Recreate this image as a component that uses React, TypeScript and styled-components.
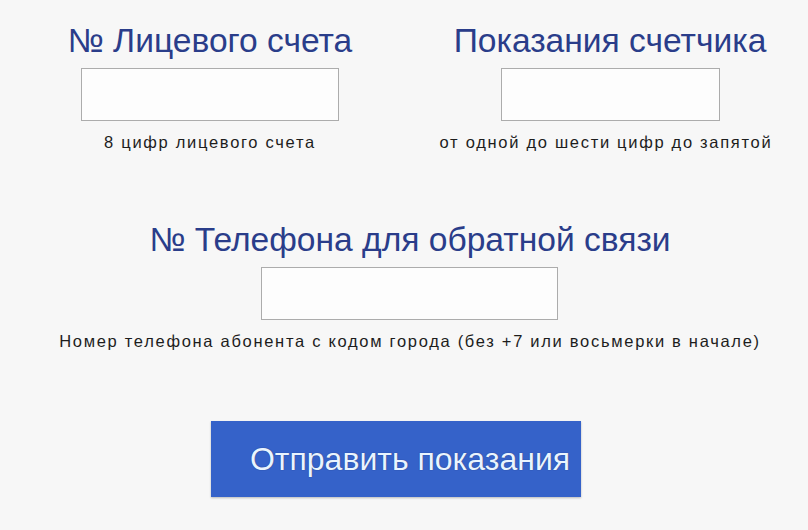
import React from 'react';
import styled, { createGlobalStyle } from 'styled-components';

const GlobalStyle = createGlobalStyle`
  html, body {
    margin: 0;
    padding: 0;
    background: #f7f7f7;
  }
  body {
    font-family: "Liberation Sans", Arial, sans-serif;
  }
`;

const Page = styled.div`
  width: 808px;
  height: 530px;
  padding-top: 24px;
  box-sizing: border-box;
  display: flex;
  flex-direction: column;
  align-items: center;
`;

const TopRow = styled.div`
  display: grid;
  grid-template-columns: 420px 380px;
  width: 808px;
`;

const Field = styled.div`
  display: flex;
  flex-direction: column;
  align-items: center;
`;

const Title = styled.h2`
  margin: 0;
  font-size: 33.6px;
  font-weight: normal;
  line-height: 34px;
  color: #2a3d8a;
  white-space: nowrap;
`;

const Input = styled.input<{ $width: number }>`
  display: block;
  width: ${(p) => p.$width}px;
  height: 53px;
  box-sizing: border-box;
  margin-top: 10px;
  border: 1px solid #acacac;
  background: #fdfdfd;
  outline: none;
`;

const Hint = styled.div<{ $shift?: number }>`
  margin-top: 11px;
  font-size: 16.5px;
  line-height: 20px;
  letter-spacing: 1.7px;
  color: #1d1d1d;
  white-space: nowrap;
  transform: translateX(${(p) => p.$shift ?? 0}px);
`;

const PhoneField = styled(Field)`
  margin-top: 71px;
  padding-left: 12px;
`;

const SubmitButton = styled.button`
  margin-top: 70px;
  width: 370px;
  height: 76px;
  border: none;
  border-radius: 0;
  background: #3562c9;
  box-shadow: 0 1px 2px rgba(0, 0, 0, 0.25);
  color: #e9f4ff;
  font-family: "Liberation Sans", Arial, sans-serif;
  font-size: 32px;
  padding: 0 0 0 28px;
  text-shadow: 0 0 1px rgba(0, 0, 40, 0.6);
  cursor: pointer;
  transform: translateX(-8px);
`;

const App: React.FC = () => {
  return (
    <>
      <GlobalStyle />
      <Page>
        <TopRow>
          <Field>
            <Title>№ Лицевого счета</Title>
            <Input $width={258} />
            <Hint>8 цифр лицевого счета</Hint>
          </Field>
          <Field>
            <Title>Показания счетчика</Title>
            <Input $width={219} />
            <Hint $shift={-4}>от одной до шести цифр до запятой</Hint>
          </Field>
        </TopRow>

        <PhoneField>
          <Title>№ Телефона для обратной связи</Title>
          <Input $width={297} />
          <Hint>Номер телефона абонента с кодом города (без +7 или восьмерки в начале)</Hint>
        </PhoneField>

        <SubmitButton type="button">Отправить показания</SubmitButton>
      </Page>
    </>
  );
};

export default App;
